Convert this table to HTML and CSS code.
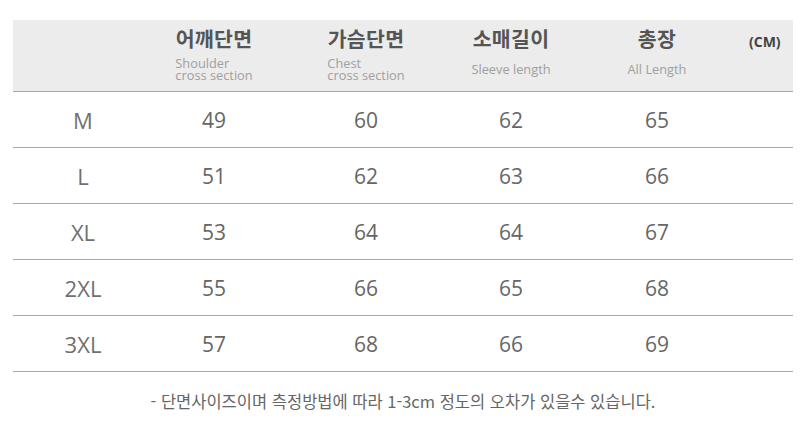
FILE: index.html
```html
<!DOCTYPE html>
<html lang="ko">
<head>
<meta charset="utf-8">
<link rel="stylesheet" href="styles.css">
</head>
<body>
<div class="page">
  <div class="chart">
    <div class="row head">
      <div class="cell"></div>
      <div class="hcell">
        <div class="ko">어깨단면</div>
        <div class="en"><div class="en-in"><div class="ln">Shoulder</div><div class="ln">cross section</div></div></div>
      </div>
      <div class="hcell">
        <div class="ko">가슴단면</div>
        <div class="en"><div class="en-in"><div class="ln">Chest</div><div class="ln">cross section</div></div></div>
      </div>
      <div class="hcell">
        <div class="ko">소매길이</div>
        <div class="en"><div class="en-in"><div class="ln">Sleeve length</div></div></div>
      </div>
      <div class="hcell">
        <div class="ko">총장</div>
        <div class="en"><div class="en-in"><div class="ln">All Length</div></div></div>
      </div>
      <div class="unit">(CM)</div>
    </div>
    <div class="row body"><div class="size">M</div><div class="num">49</div><div class="num">60</div><div class="num">62</div><div class="num">65</div><div></div></div>
    <div class="row body"><div class="size">L</div><div class="num">51</div><div class="num">62</div><div class="num">63</div><div class="num">66</div><div></div></div>
    <div class="row body"><div class="size">XL</div><div class="num">53</div><div class="num">64</div><div class="num">64</div><div class="num">67</div><div></div></div>
    <div class="row body"><div class="size">2XL</div><div class="num">55</div><div class="num">66</div><div class="num">65</div><div class="num">68</div><div></div></div>
    <div class="row body"><div class="size">3XL</div><div class="num">57</div><div class="num">68</div><div class="num">66</div><div class="num">69</div><div></div></div>
  </div>
  <p class="note">- 단면사이즈이며 측정방법에 따라 1-3cm 정도의 오차가 있을수 있습니다.</p>
</div>
</body>
</html>
```
FILE: styles.css
```css
* { box-sizing: border-box; }
html, body { margin: 0; padding: 0; background: #fff; }
body {
  font-family: "Open Sans", "Noto Sans CJK KR", sans-serif;
  width: 807px;
  height: 423px;
  overflow: hidden;
}
.page { padding: 20px 14px 0 13px; }
.chart { width: 780px; }
.row {
  display: grid;
  grid-template-columns: 140px 122px 182px 108px 184px 44px;
  border-bottom: 1px solid #a8a8a8;
}
.head {
  background: #ececec;
  height: 72px;
  padding-top: 6px;
}
.hcell {
  display: flex;
  flex-direction: column;
  align-items: center;
}
.ko {
  font-family: "Noto Sans CJK KR", sans-serif;
  font-weight: 700;
  font-size: 20.5px;
  line-height: 24px;
  color: #555;
  letter-spacing: 0.3px;
}
.en {
  margin-top: 5px;
  height: 28px;
  display: flex;
  align-items: center;
}
.en-in {
  font-family: "Open Sans", sans-serif;
  font-size: 12.8px;
  color: #a0a0a0;
  text-align: left;
}
.ln { line-height: 12px; height: 12px; }
.unit {
  font-family: "Open Sans", sans-serif;
  font-weight: 700;
  font-size: 14px;
  line-height: 18px;
  color: #444;
  padding-top: 7px;
}
.body { height: 56px; align-items: center; }
.size, .num {
  text-align: center;
  font-size: 21px;
  line-height: 24px;
  font-weight: 500;
}
.size { color: #707070; font-size: 22px; }
.num { color: #666; }
.note {
  margin: 19px 0 0 0;
  width: 780px;
  text-align: center;
  font-family: "Noto Sans CJK KR", sans-serif;
  font-size: 16.5px;
  line-height: 20px;
  color: #666;
}
```
